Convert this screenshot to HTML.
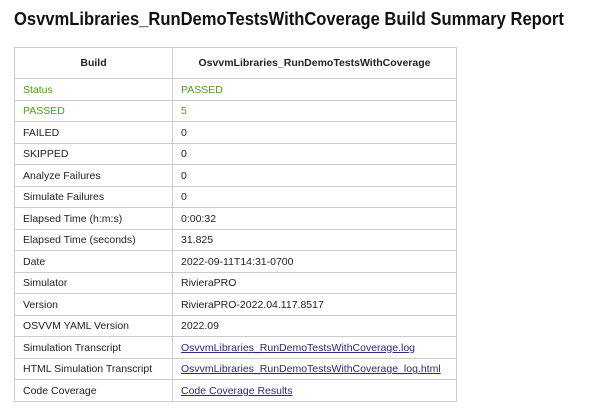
<!DOCTYPE html>
<html><head><meta charset="utf-8"><style>
body{margin:0;background:#fff;font-family:"Liberation Sans",sans-serif;color:#222;}
h1{position:absolute;left:14px;top:9px;margin:0;font-size:18px;font-weight:bold;white-space:nowrap;font-family:"Liberation Sans",sans-serif;color:#111;transform:scaleX(0.92);transform-origin:left top;}
table{position:absolute;left:14px;top:47px;border-collapse:collapse;font-size:10.5px;table-layout:fixed;}
td,th{border:1px solid #ccc;padding:1px 0 0 8px;height:19.5px;text-align:left;white-space:nowrap;overflow:hidden;}
th{height:30px;text-align:center;padding:0;font-weight:bold;}
td:first-child,th:first-child{width:149px;}
td:last-child,th:last-child{width:275px;}
.g td{color:#4f9a1a;}
a{color:#2a2a80;text-decoration:underline;}
</style></head><body>
<h1>OsvvmLibraries_RunDemoTestsWithCoverage Build Summary Report</h1>
<table>
<tr><th>Build</th><th>OsvvmLibraries_RunDemoTestsWithCoverage</th></tr>
<tr class="g"><td>Status</td><td>PASSED</td></tr>
<tr class="g"><td>PASSED</td><td>5</td></tr>
<tr><td>FAILED</td><td>0</td></tr>
<tr><td>SKIPPED</td><td>0</td></tr>
<tr><td>Analyze Failures</td><td>0</td></tr>
<tr><td>Simulate Failures</td><td>0</td></tr>
<tr><td>Elapsed Time (h:m:s)</td><td>0:00:32</td></tr>
<tr><td>Elapsed Time (seconds)</td><td>31.825</td></tr>
<tr><td>Date</td><td>2022-09-11T14:31-0700</td></tr>
<tr><td>Simulator</td><td>RivieraPRO</td></tr>
<tr><td>Version</td><td>RivieraPRO-2022.04.117.8517</td></tr>
<tr><td>OSVVM YAML Version</td><td>2022.09</td></tr>
<tr><td>Simulation Transcript</td><td><a>OsvvmLibraries_RunDemoTestsWithCoverage.log</a></td></tr>
<tr><td>HTML Simulation Transcript</td><td><a>OsvvmLibraries_RunDemoTestsWithCoverage_log.html</a></td></tr>
<tr><td>Code Coverage</td><td><a>Code Coverage Results</a></td></tr>
</table>
</body></html>
